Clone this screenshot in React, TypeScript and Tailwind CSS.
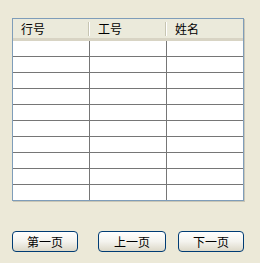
import React from "react";

const columns = ["行号", "工号", "姓名"];
const rows = Array.from({ length: 10 }, (_, i) => i);

const Button = ({ label, className }: { label: string; className?: string }) => (
  <button
    className={
      "h-[21px] rounded-[4px] border border-[#003c74] bg-gradient-to-b from-white via-[#f4f3ee] to-[#dcd8c8] text-[12px] leading-none text-black " +
      (className ?? "")
    }
  >
    {label}
  </button>
);

const App = () => {
  return (
    <div
      className="w-[260px] h-[263px] bg-[#ece9d8] pl-[12px] pt-[18px]"
      style={{ fontFamily: '"Noto Sans CJK SC", "Liberation Sans", sans-serif' }}
    >
      {/* Grid */}
      <div className="w-[232px] border border-[#7f9db9] bg-white shadow-[1px_1px_0_#c9c6b6]">
        <div className="grid grid-cols-[77px_77px_76px] h-[22px] bg-[#ebeadb] border-b-[3px] border-[#d8d4c4]">
          {columns.map((c, i) => (
            <div key={c} className="flex items-center h-[19px]">
              <span className="flex-1 pl-[8px] text-[12px] leading-none text-black">{c}</span>
              {i < 2 && (
                <>
                  <div className="w-px h-[14px] bg-[#c7c5b2]" />
                  <div className="w-px h-[14px] bg-white" />
                </>
              )}
            </div>
          ))}
        </div>
        {rows.map((r) => (
          <div
            key={r}
            className={
              "grid grid-cols-[77px_77px_76px] " +
              (r < 9 ? "h-[16px] border-b border-[#767676]" : "h-[15px]")
            }
          >
            <div className="border-r border-[#767676]" />
            <div className="border-r border-[#767676]" />
            <div />
          </div>
        ))}
      </div>

      {/* Paging */}
      <div className="flex mt-[30px]">
        <Button label="第一页" className="w-[66px]" />
        <Button label="上一页" className="w-[68px] ml-[20px]" />
        <Button label="下一页" className="w-[66px] ml-[12px]" />
      </div>
    </div>
  );
};

export default App;
